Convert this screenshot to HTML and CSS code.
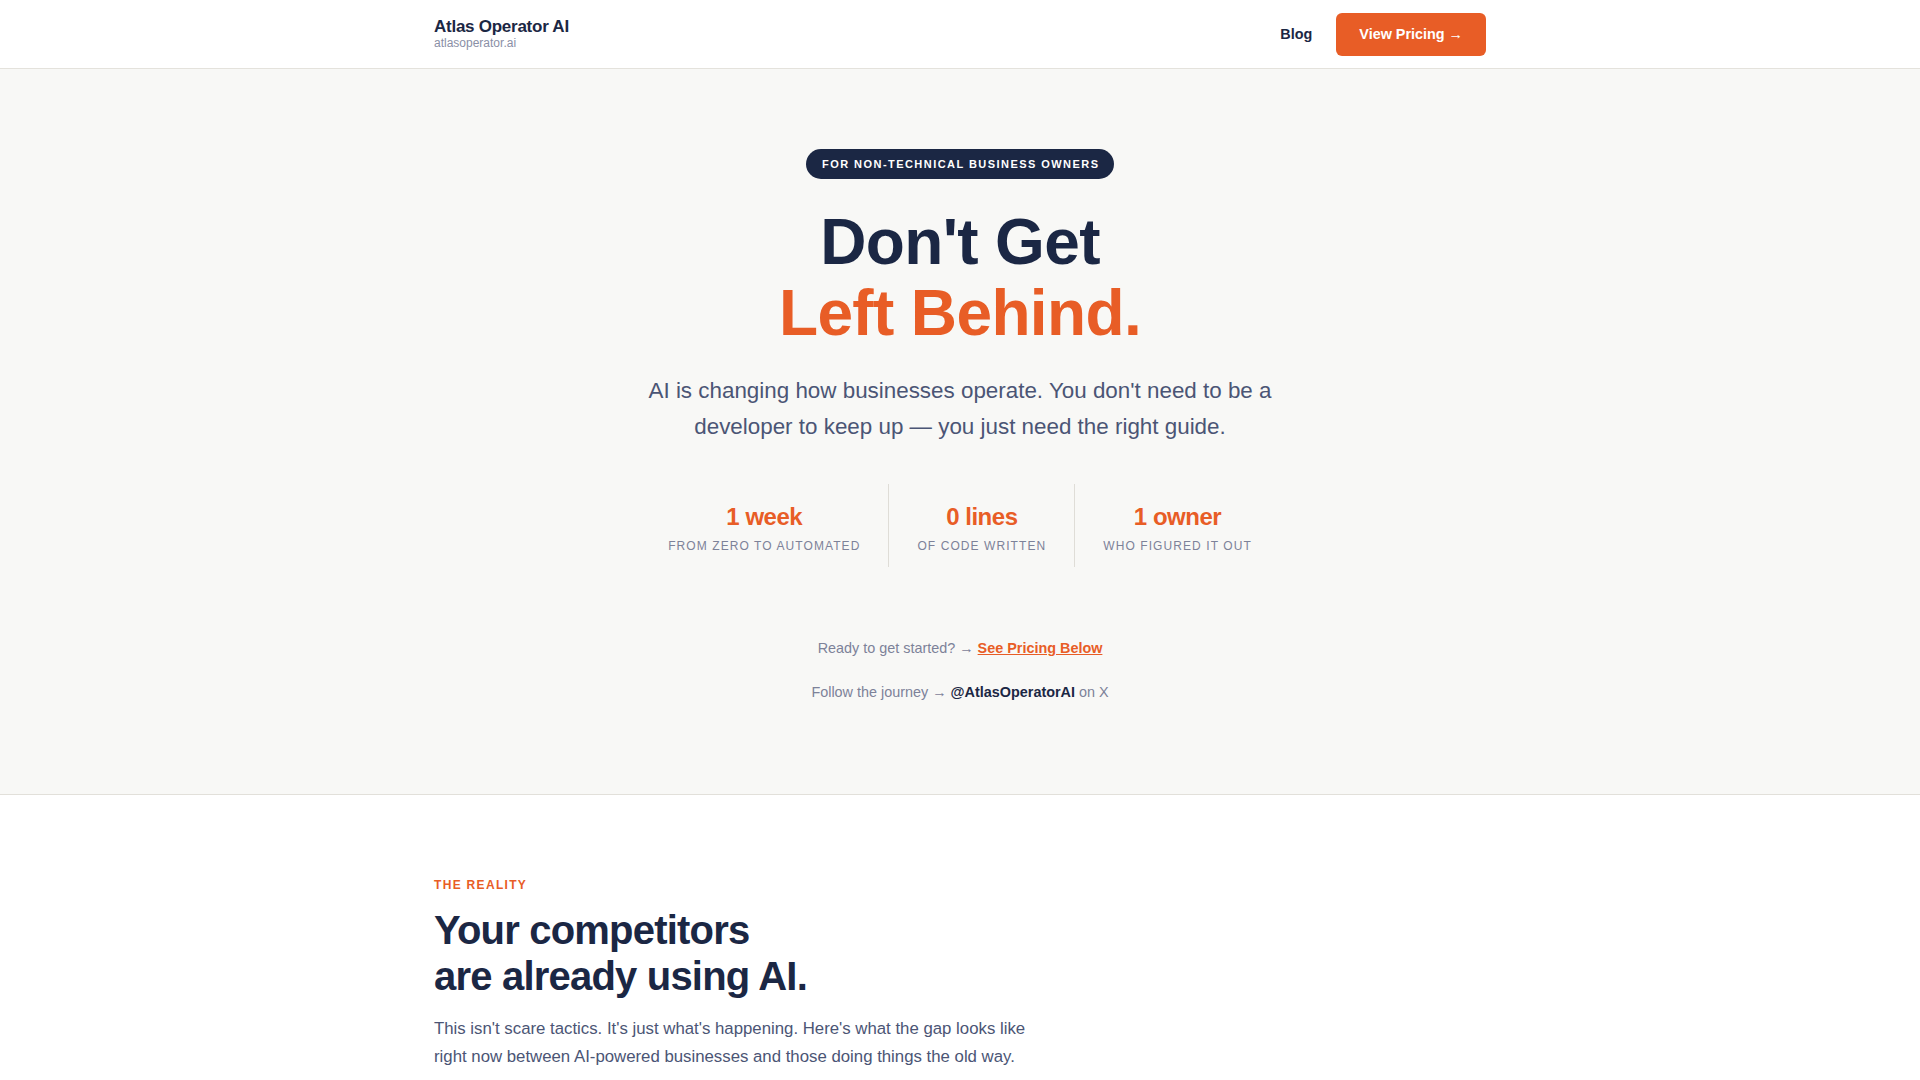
FILE: index.html
```html
<!DOCTYPE html>
<html lang="en">
<head>
<meta charset="utf-8">
<title>Atlas Operator AI</title>
<link rel="stylesheet" href="styles.css">
</head>
<body>
<header class="site-header">
  <div class="container header-inner">
    <div class="brand">
      <div class="brand-name">Atlas Operator AI</div>
      <div class="brand-domain">atlasoperator.ai</div>
    </div>
    <nav class="nav">
      <a class="nav-link" href="#">Blog</a>
      <a class="btn-primary" href="#">View Pricing →</a>
    </nav>
  </div>
</header>

<section class="hero">
  <div class="container hero-inner">
    <span class="badge">For non-technical business owners</span>
    <h1 class="hero-title">Don't Get<br><span class="accent">Left Behind.</span></h1>
    <p class="hero-sub">AI is changing how businesses operate. You don't need to be a developer to keep up — you just need the right guide.</p>
    <div class="stats">
      <div class="stat">
        <div class="stat-num">1 week</div>
        <div class="stat-label">From zero to automated</div>
      </div>
      <div class="stat">
        <div class="stat-num">0 lines</div>
        <div class="stat-label">Of code written</div>
      </div>
      <div class="stat">
        <div class="stat-num">1 owner</div>
        <div class="stat-label">Who figured it out</div>
      </div>
    </div>
    <p class="cta-line">Ready to get started? → <a class="cta-link" href="#">See Pricing Below</a></p>
    <p class="follow-line">Follow the journey → <a class="handle" href="#">@AtlasOperatorAI</a> on X</p>
  </div>
</section>

<section class="reality">
  <div class="container">
    <div class="eyebrow">The Reality</div>
    <h2 class="section-title">Your competitors<br>are already using AI.</h2>
    <p class="section-text">This isn't scare tactics. It's just what's happening. Here's what the gap looks like right now between AI-powered businesses and those doing things the old way.</p>
  </div>
</section>
</body>
</html>
```

FILE: styles.css
```css
* { box-sizing: border-box; }
html, body { margin: 0; padding: 0; }
body {
  font-family: "Liberation Sans", Arial, sans-serif;
  color: #1b2744;
  background: #ffffff;
}
a { text-decoration: none; color: inherit; }
p { margin: 0; }
h1, h2 { margin: 0; }

.container {
  max-width: 1100px;
  margin: 0 auto;
  padding: 0 24px;
}

/* Header */
.site-header {
  background: #ffffff;
  border-bottom: 1px solid #e4e2dc;
}
.header-inner {
  height: 68px;
  display: flex;
  align-items: center;
  justify-content: space-between;
}
.brand {
  padding-bottom: 2px;
}
.brand-name {
  font-size: 17px;
  font-weight: 700;
  line-height: 20px;
  letter-spacing: -0.015em;
  color: #1b2744;
}
.brand-domain {
  font-size: 12px;
  line-height: 13px;
  color: #8a8fa6;
}
.nav {
  display: flex;
  align-items: center;
  gap: 24px;
}
.nav-link {
  font-size: 14.4px;
  font-weight: 700;
  color: #1b2744;
}
.btn-primary {
  display: inline-block;
  background: #e85d26;
  color: #ffffff;
  font-size: 14.4px;
  font-weight: 700;
  line-height: 21px;
  padding: 11px 23px;
  border-radius: 6px;
}

/* Hero */
.hero {
  background: #f8f8f6;
  border-bottom: 1px solid #e2e0da;
  padding: 80px 0 90px;
}
.hero-inner {
  display: flex;
  flex-direction: column;
  align-items: center;
  text-align: center;
}
.badge {
  display: inline-block;
  background: #1b2744;
  color: #ffffff;
  font-size: 11px;
  font-weight: 700;
  line-height: 14px;
  letter-spacing: 1.45px;
  text-transform: uppercase;
  padding: 8px 15px 8px 16.5px;
  border-radius: 999px;
  margin-bottom: 28px;
}
.hero-title {
  font-size: 64px;
  font-weight: 700;
  line-height: 71px;
  letter-spacing: -0.01em;
  color: #1b2744;
}
.accent { color: #e85d26; }
.hero-sub {
  margin-top: 24px;
  max-width: 640px;
  font-size: 22.4px;
  line-height: 1.6;
  color: #4b5575;
}
.stats {
  margin-top: 39px;
  display: flex;
  justify-content: center;
}
.stat {
  padding: 17px 28px 12px;
}
.stat + .stat {
  border-left: 1px solid #dfddd7;
}
.stat-num {
  font-size: 24px;
  font-weight: 700;
  line-height: 32px;
  letter-spacing: -0.02em;
  color: #e85d26;
}
.stat-label {
  margin-top: 4px;
  font-size: 12px;
  line-height: 18px;
  letter-spacing: 0.09em;
  text-transform: uppercase;
  color: #7d8299;
}
.cta-line {
  margin-top: 69px;
  font-size: 14.4px;
  line-height: 24px;
  color: #7d8299;
}
.cta-link {
  color: #e85d26;
  font-weight: 700;
  text-decoration: underline;
}
.follow-line {
  margin-top: 20px;
  font-size: 14.4px;
  line-height: 24px;
  color: #7d8299;
}
.handle {
  color: #1b2744;
  font-weight: 700;
}

/* Reality section */
.reality {
  background: #ffffff;
  padding: 82px 0 60px;
}
.eyebrow {
  font-size: 12px;
  font-weight: 700;
  line-height: 16px;
  letter-spacing: 0.11em;
  text-transform: uppercase;
  color: #e85d26;
  margin-bottom: 14px;
}
.section-title {
  font-size: 40px;
  font-weight: 700;
  line-height: 1.15;
  letter-spacing: -0.02em;
  color: #1b2744;
}
.section-text {
  margin-top: 16px;
  max-width: 600px;
  font-size: 16.8px;
  line-height: 1.68;
  color: #4b5575;
}
```
